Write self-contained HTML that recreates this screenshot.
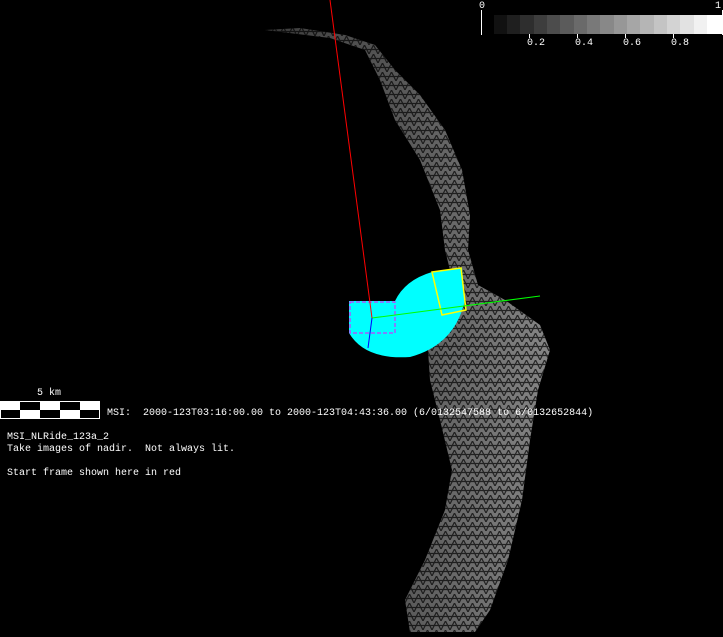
<!DOCTYPE html>
<html><head><style>
body{margin:0;background:#000;width:723px;height:637px;overflow:hidden;position:relative;font-family:"Liberation Mono",monospace;color:#fff}
.t{position:absolute;font-size:10px;line-height:12px;white-space:pre;color:#fff}
</style></head><body>
<svg width="723" height="637" style="position:absolute;left:0;top:0">
<defs>
<pattern id="m" width="9" height="9" patternUnits="userSpaceOnUse">
<path d="M0 9 L4.5 0 L9 9 M0 4.5 H9" stroke="#000" stroke-width="1.2" fill="none" opacity="0.7"/>
</pattern>
<linearGradient id="g" x1="0" y1="0" x2="1" y2="0">
<stop offset="0" stop-color="#555"/><stop offset="0.5" stop-color="#808080"/><stop offset="1" stop-color="#c0c0c0"/>
</linearGradient>
</defs>
<path d="M265 30 L300 28 L345 35 L375 45 L395 70 L420 95 L445 130 L462 170 L470 215 L468 250 L478 285 L505 300 L540 325 L550 350 L538 390 L530 440 L522 500 L508 560 L490 610 L475 632 L410 632 L405 600 L425 560 L445 510 L452 470 L440 420 L430 380 L428 350 L440 320 L455 290 L445 250 L440 210 L420 160 L395 120 L380 80 L365 50 L330 38 Z" fill="url(#g)" opacity="0.7"/>
<path d="M265 30 L300 28 L345 35 L375 45 L395 70 L420 95 L445 130 L462 170 L470 215 L468 250 L478 285 L505 300 L540 325 L550 350 L538 390 L530 440 L522 500 L508 560 L490 610 L475 632 L410 632 L405 600 L425 560 L445 510 L452 470 L440 420 L430 380 L428 350 L440 320 L455 290 L445 250 L440 210 L420 160 L395 120 L380 80 L365 50 L330 38 Z" fill="url(#m)"/>
<path d="M349 301 L395 301 Q405 280 432 272 L462 268 L465 300 Q455 345 410 357 Q365 360 349 333 Z" fill="#00ffff"/>
<rect x="350" y="302" width="45" height="31" fill="none" stroke="#ff00ff" stroke-dasharray="4 2"/>
<path d="M432 272 L461 268 L466 310 L442 315 Z" fill="none" stroke="#ffff00" stroke-width="1.5"/>
<line x1="330" y1="0" x2="372" y2="318" stroke="#f00"/>
<line x1="372" y1="318" x2="540" y2="296" stroke="#0f0"/>
<line x1="372" y1="318" x2="368" y2="348" stroke="#00f"/>
<g>
<rect x="494" y="15" width="14" height="19" fill="#111"/><rect x="507" y="15" width="14" height="19" fill="#1f1f1f"/><rect x="520" y="15" width="14" height="19" fill="#2e2e2e"/><rect x="534" y="15" width="14" height="19" fill="#3d3d3d"/><rect x="547" y="15" width="14" height="19" fill="#4c4c4c"/><rect x="560" y="15" width="14" height="19" fill="#5b5b5b"/><rect x="574" y="15" width="14" height="19" fill="#6a6a6a"/><rect x="587" y="15" width="14" height="19" fill="#797979"/><rect x="600" y="15" width="14" height="19" fill="#888"/><rect x="614" y="15" width="14" height="19" fill="#979797"/><rect x="627" y="15" width="14" height="19" fill="#a6a6a6"/><rect x="640" y="15" width="14" height="19" fill="#b5b5b5"/><rect x="654" y="15" width="14" height="19" fill="#c4c4c4"/><rect x="667" y="15" width="14" height="19" fill="#d3d3d3"/><rect x="680" y="15" width="14" height="19" fill="#e2e2e2"/><rect x="694" y="15" width="14" height="19" fill="#f1f1f1"/><rect x="707" y="15" width="15" height="19" fill="#fff"/>
<line x1="481.5" y1="10" x2="481.5" y2="35" stroke="#fff"/>
<line x1="722.5" y1="10" x2="722.5" y2="35" stroke="#fff"/>
<line x1="529.5" y1="34" x2="529.5" y2="38" stroke="#fff"/><line x1="577.5" y1="34" x2="577.5" y2="38" stroke="#fff"/><line x1="625.5" y1="34" x2="625.5" y2="38" stroke="#fff"/><line x1="673.5" y1="34" x2="673.5" y2="38" stroke="#fff"/>
</g>
<g>
<rect x="0" y="401" width="100" height="18" fill="#fff"/>
<rect x="20" y="402" width="20" height="8" fill="#000"/><rect x="60" y="402" width="20" height="8" fill="#000"/>
<rect x="1" y="410" width="19" height="8" fill="#000"/><rect x="40" y="410" width="20" height="8" fill="#000"/><rect x="80" y="410" width="19" height="8" fill="#000"/>
</g>
</svg>
<div class="t" style="left:479px;top:1px">0</div>
<div class="t" style="left:715px;top:1px">1</div>
<div class="t" style="left:527px;top:38px">0.2</div>
<div class="t" style="left:575px;top:38px">0.4</div>
<div class="t" style="left:623px;top:38px">0.6</div>
<div class="t" style="left:671px;top:38px">0.8</div>
<div class="t" style="left:37px;top:388px">5 km</div>
<div class="t" style="left:107px;top:408px">MSI:  2000-123T03:16:00.00 to 2000-123T04:43:36.00 (6/0132547588 to 6/0132652844)</div>
<div class="t" style="left:7px;top:432px">MSI_NLRide_123a_2
Take images of nadir.  Not always lit.

Start frame shown here in red</div>
</body></html>
